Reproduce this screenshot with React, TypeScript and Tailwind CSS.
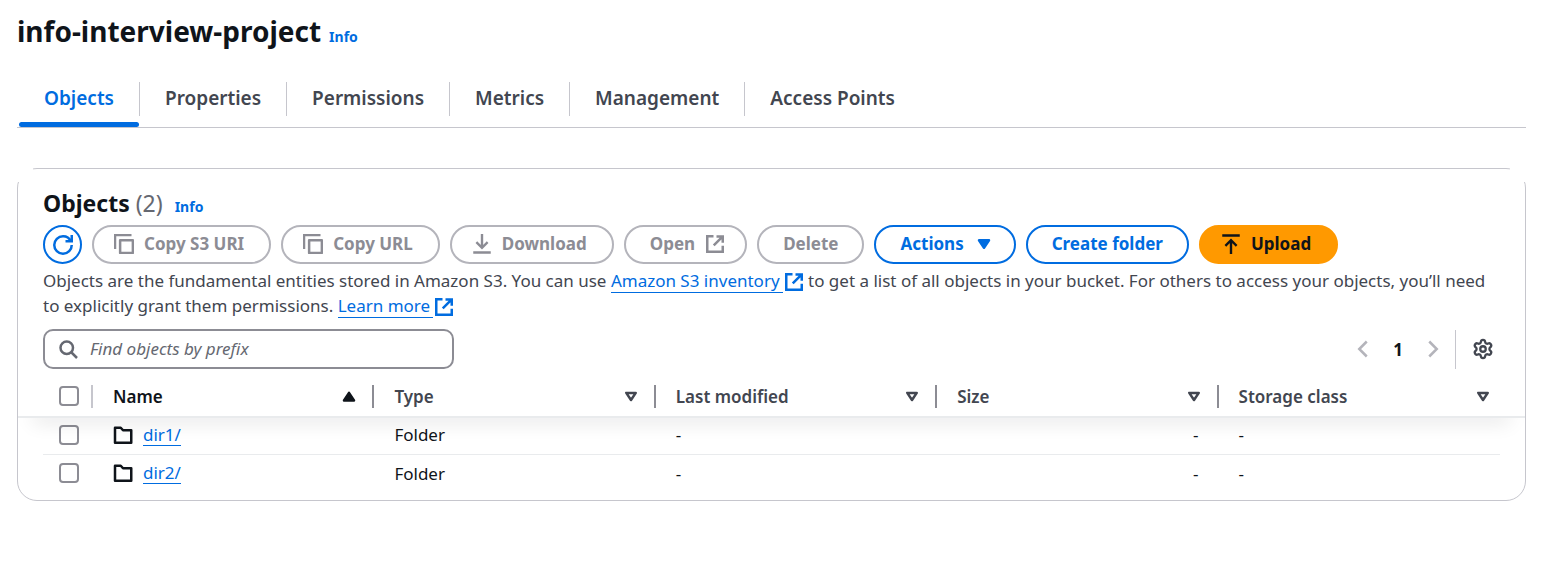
import type { ReactNode } from "react";
import { Settings } from "lucide-react";

const tabs = ["Objects", "Properties", "Permissions", "Metrics", "Management", "Access Points"];
const columns = ["Name", "Type", "Last modified", "Size", "Storage class"];
const rows = [
  { name: "dir1/", type: "Folder", modified: "-", size: "-", storage: "-" },
  { name: "dir2/", type: "Folder", modified: "-", size: "-", storage: "-" },
];

function Icon({ children, className = "" }: { children: ReactNode; className?: string }) {
  return (
    <svg
      viewBox="0 0 16 16"
      className={`size-5 shrink-0 ${className}`}
      fill="none"
      stroke="currentColor"
      strokeWidth="2"
      aria-hidden="true"
    >
      {children}
    </svg>
  );
}

function RefreshIcon() {
  return (
    <Icon>
      <path d="M10 5h5V0" />
      <path d="M15 8a7 7 0 0 1-7 7 7 7 0 0 1-7-7 7 7 0 0 1 7-7 6.9 6.9 0 0 1 6.3 4" />
    </Icon>
  );
}

function CopyIcon() {
  return (
    <Icon>
      <path d="M.9 12V.9h13.1" strokeWidth="1.8" />
      <path d="M4.900 4.900h10.200v10.200H4.900z" strokeLinejoin="round" />
    </Icon>
  );
}

function DownloadIcon() {
  return (
    <Icon>
      <path d="M1 14.800h14M8 0v10.500M3.500 6.500 8 11l4.500-4.500" strokeWidth="1.9" />
    </Icon>
  );
}

function UploadIcon() {
  return (
    <Icon>
      <path d="M1 1.200h14M8 16V5.500M3.500 9.500 8 5l4.500 4.500" strokeWidth="1.9" />
    </Icon>
  );
}

function ExternalIcon({ className = "" }: { className?: string }) {
  return (
    <Icon className={className}>
      <path d="M9.200 1.900h5v5M7 9.100l7-7M14.200 9.300v4.900H1.800V1.800h5" />
    </Icon>
  );
}

function FolderIcon() {
  return (
    <Icon className="text-[#0f141a]">
      <path d="M1.600 14.200V2.200h4.600l1.800 2h6.600v10z" strokeLinejoin="round" />
    </Icon>
  );
}

function SortIcon({ ascending }: { ascending: boolean }) {
  return ascending ? (
    <Icon className="text-[#0f141a]">
      <path d="M8 5.500 12 11.500H4z" fill="currentColor" strokeLinejoin="round" />
    </Icon>
  ) : (
    <Icon>
      <path d="M4.200 5.500h7.600L8 11.200z" strokeLinejoin="round" />
    </Icon>
  );
}

function Chevron({ d, label }: { d: string; label: string }) {
  return (
    <button type="button" disabled aria-label={label} className="flex text-[#b4b4bb]">
      <Icon>
        <path d={d} />
      </Icon>
    </button>
  );
}

function Button({ children, tone = "disabled", pad = "text" }: { children: ReactNode; tone?: "disabled" | "normal" | "primary"; pad?: "text" | "icon" }) {
  const tones = {
    disabled: "border-[#b4b4bb] text-[#8c8c94]",
    normal: "border-[#006ce0] text-[#006ce0]",
    primary: "border-[#ff9900] bg-[#ff9900] text-[#0f141a]",
  };
  const pads = { text: "px-6", icon: "pl-5 pr-[25px]" };
  return (
    <button
      type="button"
      disabled={tone === "disabled"}
      className={`flex h-[39px] items-center gap-[10px] rounded-full border-2 pb-[2px] font-bold ${tones[tone]} ${pads[pad]}`}
    >
      {children}
    </button>
  );
}

function InfoLink() {
  return (
    <a href="#info" className="text-sm font-bold text-[#006ce0]">
      Info
    </a>
  );
}

function ExternalLink({ children }: { children: ReactNode }) {
  return (
    <a href="#docs" className="whitespace-nowrap text-[#006ce0]">
      <span className="border-b border-[#006ce0] pr-[3px]">{children}</span>
      <ExternalIcon className="ml-px inline-block align-[-5px]" />
    </a>
  );
}

function Checkbox({ label }: { label: string }) {
  return (
    <input
      type="checkbox"
      aria-label={label}
      className="block size-5 appearance-none rounded-[4px] border-2 border-[#8c8c94] bg-white checked:border-[#006ce0] checked:bg-[#006ce0]"
    />
  );
}

export default function App() {
  return (
    <main className="bg-white pr-[15px] pl-[17px] font-['Noto_Sans',sans-serif] text-[17px] leading-[25px] text-[#0f141a]">
      <header className="flex items-baseline gap-2 pt-[11px]">
        <h1 className="text-[28px] leading-10 font-bold">info-interview-project</h1>
        <InfoLink />
      </header>

      <nav role="tablist" className="mt-[21px] flex border-b border-[#c6c6cd] pl-[2px]">
        {tabs.map((tab, i) => (
          <div key={tab} className="flex flex-col">
            <div
              className={`mt-[10px] flex h-[34px] items-center pb-[2px] ${i < tabs.length - 1 ? "border-r border-[#c6c6cd]" : ""}`}
            >
              <button
                type="button"
                role="tab"
                aria-selected={i === 0}
                className={`px-[25px] text-[19px] font-semibold ${i === 0 ? "text-[#006ce0]" : "text-[#424650]"}`}
              >
                {tab}
              </button>
            </div>
            <div className={`mt-[6px] mr-px h-[5px] rounded-[3px] ${i === 0 ? "bg-[#006ce0]" : ""}`} />
          </div>
        ))}
      </nav>

      <section className="relative mt-10 rounded-[20px] border border-[#c6c6cd] px-[25px] pb-2">
        <span className="absolute -top-px -left-px h-[14px] w-4 bg-white" />
        <span className="absolute -top-px -right-px h-[14px] w-4 bg-white" />

        <div className="flex items-baseline gap-3 pt-[19px]">
          <h2 className="text-[23px] leading-[30px] font-bold">
            Objects <span className="font-normal text-[#656871]">(2)</span>
          </h2>
          <InfoLink />
        </div>

        <div className="mt-[7px] flex flex-wrap gap-[10px]">
          <button
            type="button"
            aria-label="Refresh"
            className="flex size-[39px] items-center justify-center rounded-full border-2 border-[#006ce0] text-[#006ce0]"
          >
            <RefreshIcon />
          </button>
          <Button pad="icon"><CopyIcon />Copy S3 URI</Button>
          <Button pad="icon"><CopyIcon />Copy URL</Button>
          <Button pad="icon"><DownloadIcon />Download</Button>
          <Button>Open<ExternalIcon className="-mr-1" /></Button>
          <Button>Delete</Button>
          <Button tone="normal">
            Actions
            <Icon className="-mr-1">
              <path d="M4 5h8l-4 6z" fill="currentColor" strokeLinejoin="round" />
            </Icon>
          </Button>
          <Button tone="normal">Create folder</Button>
          <Button tone="primary" pad="icon"><UploadIcon />Upload</Button>
        </div>

        <p className="mt-1 text-[#424650]">
          Objects are the fundamental entities stored in Amazon S3. You can use{" "}
          <ExternalLink>Amazon S3 inventory</ExternalLink> to get a list of all objects in your bucket. For others to
          access your objects, you’ll need to explicitly grant them permissions. <ExternalLink>Learn more</ExternalLink>
        </p>

        <div className="mt-[11px] flex items-center justify-between">
          <label className="flex h-10 w-[411px] items-center gap-3 rounded-[10px] border-2 border-[#8c8c94] px-[13px]">
            <Icon className="text-[#656871]">
              <circle cx="7" cy="7" r="5" />
              <path d="m10.600 10.600 4.600 4.600" />
            </Icon>
            <input
              type="text"
              aria-label="Find objects by prefix"
              placeholder="Find objects by prefix"
              className="min-w-0 grow bg-transparent pb-[2px] outline-none placeholder:text-[#656871] placeholder:italic"
            />
          </label>
          <div className="flex items-center pr-[6px]">
            <Chevron d="M11 2 5 8l6 6" label="Previous page" />
            <button type="button" aria-current="page" className="w-[50px] text-center font-bold">1</button>
            <Chevron d="m5 2 6 6-6 6" label="Next page" />
            <div className="ml-3 h-[39px] border-l border-[#c6c6cd] pl-4">
              <button type="button" aria-label="Preferences" className="flex h-full items-center text-[#424650]">
                <Settings className="size-[22px]" strokeWidth={2.5} />
              </button>
            </div>
          </div>
        </div>

        <table className="mt-[7px] w-full table-fixed border-collapse text-left">
          <colgroup>
            <col className="w-[50px]" />
          </colgroup>
          <thead className="relative after:pointer-events-none after:absolute after:inset-y-0 after:-inset-x-[25px] after:shadow-[0_2px_0_0_#e9ebed,0_20px_20px_-15px_rgba(0,7,22,0.14)]">
            <tr className="h-10">
              <th className="p-0">
                <div className="flex h-[23px] items-center border-r-2 border-[#c6c6cd] pl-4">
                  <Checkbox label="Select all objects" />
                </div>
              </th>
              {columns.map((column, i) => (
                <th
                  key={column}
                  aria-sort={i === 0 ? "ascending" : "none"}
                  className={`p-0 font-semibold ${i === 0 ? "" : "text-[#424650]"}`}
                >
                  <div
                    className={`flex h-[23px] items-center justify-between pl-5 ${
                      i < columns.length - 1 ? "border-r-2 border-[#8c8c94] pr-[13px]" : "pr-[7px]"
                    }`}
                  >
                    {column}
                    <button type="button" aria-label={`Sort by ${column}`} className="flex">
                      <SortIcon ascending={i === 0} />
                    </button>
                  </div>
                </th>
              ))}
            </tr>
          </thead>
          <tbody>
            {rows.map((row) => (
              <tr key={row.name} className="h-[38px] border-b border-[#e9ebed] last:border-b-0">
                <td className="p-0 pl-4">
                  <Checkbox label={`Select ${row.name}`} />
                </td>
                <td className="p-0 pl-5">
                  <div className="flex items-center gap-[10px]">
                    <FolderIcon />
                    <a href={`#${row.name}`} className="border-b border-[#006ce0] leading-[21px] text-[#006ce0]">
                      {row.name}
                    </a>
                  </div>
                </td>
                <td className="p-0 pl-5">{row.type}</td>
                <td className="p-0 pl-5">{row.modified}</td>
                <td className="p-0 pr-5 text-right">{row.size}</td>
                <td className="p-0 pl-5">{row.storage}</td>
              </tr>
            ))}
          </tbody>
        </table>
      </section>
    </main>
  );
}
